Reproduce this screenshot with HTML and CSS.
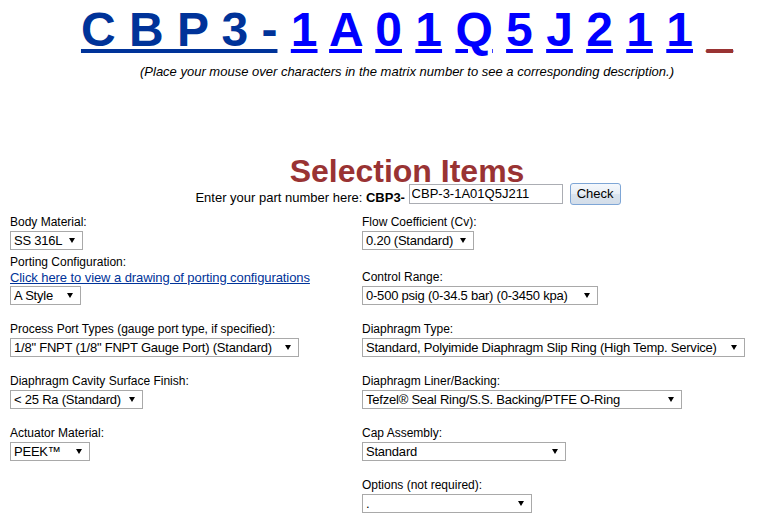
FILE: index.html
```html
<!DOCTYPE html>
<html lang="en">
<head>
<meta charset="utf-8">
<title>CBP3 Matrix Number</title>
<link rel="stylesheet" href="styles.css">
</head>
<body>
<div class="top">
  <div class="code"><span class="prefix">C B P 3 -</span> <a href="#">1</a> <a href="#">A</a> <a href="#">0</a> <a href="#">1</a> <a href="#">Q</a> <a href="#">5</a> <a href="#">J</a> <a href="#">2</a> <a href="#">1</a> <a href="#">1</a> <span class="blank">_</span></div>
  <p class="hint">(Place your mouse over characters in the matrix number to see a corresponding description.)</p>
  <h1 class="title">Selection Items</h1>
  <div class="lookup">Enter your part number here: <b>CBP3-</b> <input class="part" type="text" value="CBP-3-1A01Q5J211"><button class="check" type="button">Check</button></div>
</div>

<div class="form">
  <div class="row tight">
    <div class="field">
      <label>Body Material:</label>
      <span class="sel"><select class="w-body"><option>SS 316L</option></select></span>
    </div>
    <div class="field">
      <label>Flow Coefficient (Cv):</label>
      <span class="sel"><select class="w-cv"><option>0.20 (Standard)</option></select></span>
    </div>
  </div>
  <div class="row">
    <div class="field">
      <label>Porting Configuration:</label>
      <a class="config" href="#">Click here to view a drawing of porting configurations</a>
      <span class="sel"><select class="w-port"><option>A Style</option></select></span>
    </div>
    <div class="field">
      <label>Control Range:</label>
      <span class="sel"><select class="w-range"><option>0-500 psig (0-34.5 bar) (0-3450 kpa)</option></select></span>
    </div>
  </div>
  <div class="row">
    <div class="field">
      <label>Process Port Types (gauge port type, if specified):</label>
      <span class="sel"><select class="w-ppt"><option>1/8" FNPT (1/8" FNPT Gauge Port) (Standard)</option></select></span>
    </div>
    <div class="field">
      <label>Diaphragm Type:</label>
      <span class="sel"><select class="w-dtype"><option>Standard, Polyimide Diaphragm Slip Ring (High Temp. Service)</option></select></span>
    </div>
  </div>
  <div class="row">
    <div class="field">
      <label>Diaphragm Cavity Surface Finish:</label>
      <span class="sel"><select class="w-finish"><option>&lt; 25 Ra (Standard)</option></select></span>
    </div>
    <div class="field">
      <label>Diaphragm Liner/Backing:</label>
      <span class="sel"><select class="w-liner"><option>Tefzel® Seal Ring/S.S. Backing/PTFE O-Ring</option></select></span>
    </div>
  </div>
  <div class="row">
    <div class="field">
      <label>Actuator Material:</label>
      <span class="sel"><select class="w-act"><option>PEEK™</option></select></span>
    </div>
    <div class="field">
      <label>Cap Assembly:</label>
      <span class="sel"><select class="w-cap"><option>Standard</option></select></span>
    </div>
  </div>
  <div class="row">
    <div class="field"></div>
    <div class="field">
      <label>Options (not required):</label>
      <span class="sel"><select class="w-opt"><option>.</option></select></span>
    </div>
  </div>
</div>
</body>
</html>
```

FILE: styles.css
```css
body {
  margin: 0;
  background: #fff;
  color: #000;
  font-family: "Liberation Sans", Arial, sans-serif;
}

.top {
  margin-left: 52px;
  text-align: center;
}

.code {
  margin: 4px 0 0;
  font-size: 48px;
  font-weight: bold;
  line-height: 52px;
  white-space: nowrap;
}

.code .prefix {
  color: #003399;
  text-decoration: underline;
}

.code a {
  color: #0000ff;
  text-decoration: underline;
}

.code .blank {
  color: #993333;
  text-decoration: underline;
}

.hint {
  margin: 7.5px 0 0;
  font-size: 13px;
  font-style: italic;
  line-height: 15px;
}

.title {
  margin: 74px 0 0;
  font-size: 32px;
  line-height: 36px;
  font-weight: bold;
  color: #993333;
}

.lookup {
  margin-top: -6px;
  padding-left: 2px;
  font-size: 13px;
  line-height: 15px;
}

.part {
  width: 154px;
  height: 20px;
  box-sizing: border-box;
  margin: 0;
  padding: 0 2px;
  border: 1px solid #abadb3;
  font: 13px "Liberation Sans", Arial, sans-serif;
  color: #000;
  vertical-align: 3px;
}

.check {
  width: 51px;
  height: 22px;
  box-sizing: border-box;
  margin: 0 0 0 7px;
  padding: 0;
  border: 1px solid #7ea6d6;
  border-radius: 3px;
  background: linear-gradient(#f5f8fc, #e8eef5 50%, #dbe4ee 51%, #d3dde9);
  font: 13px "Liberation Sans", Arial, sans-serif;
  color: #000;
  vertical-align: 3px;
}

.form {
  padding: 10px 0 0 10px;
}

.row {
  display: grid;
  grid-template-columns: 352px auto;
  align-items: end;
}

.row + .row {
  margin-top: 17px;
}

.row.tight + .row {
  margin-top: 5px;
}

.field {
  display: flex;
  flex-direction: column;
  align-items: flex-start;
}

.field label {
  font-size: 12px;
  line-height: 15px;
}

.field .config {
  font-size: 13px;
  line-height: 15px;
  letter-spacing: -0.08px;
  color: #003399;
  text-decoration: underline;
}

.sel {
  position: relative;
  display: block;
  margin-top: 1px;
}

.sel select {
  -webkit-appearance: none;
  appearance: none;
  display: block;
  height: 19px;
  box-sizing: border-box;
  margin: 0;
  padding: 0 14px 0 3px;
  border: 1px solid #a9a9a9;
  border-radius: 0;
  background: #fff;
  font: 13px "Liberation Sans", Arial, sans-serif;
  letter-spacing: -0.22px;
  color: #000;
}

.sel::after {
  content: "";
  position: absolute;
  right: 8px;
  top: 7px;
  border-left: 3px solid transparent;
  border-right: 3px solid transparent;
  border-top: 5px solid #000;
  pointer-events: none;
}

.w-body { width: 73px; }
.w-port { width: 71px; }
.w-ppt { width: 289px; }
.w-finish { width: 133px; }
.w-act { width: 80px; }
.w-cv { width: 112px; }
.w-range { width: 236px; }
.w-dtype { width: 383px; }
.w-liner { width: 320px; }
.w-cap { width: 204px; }
.w-opt { width: 170px; }
```
